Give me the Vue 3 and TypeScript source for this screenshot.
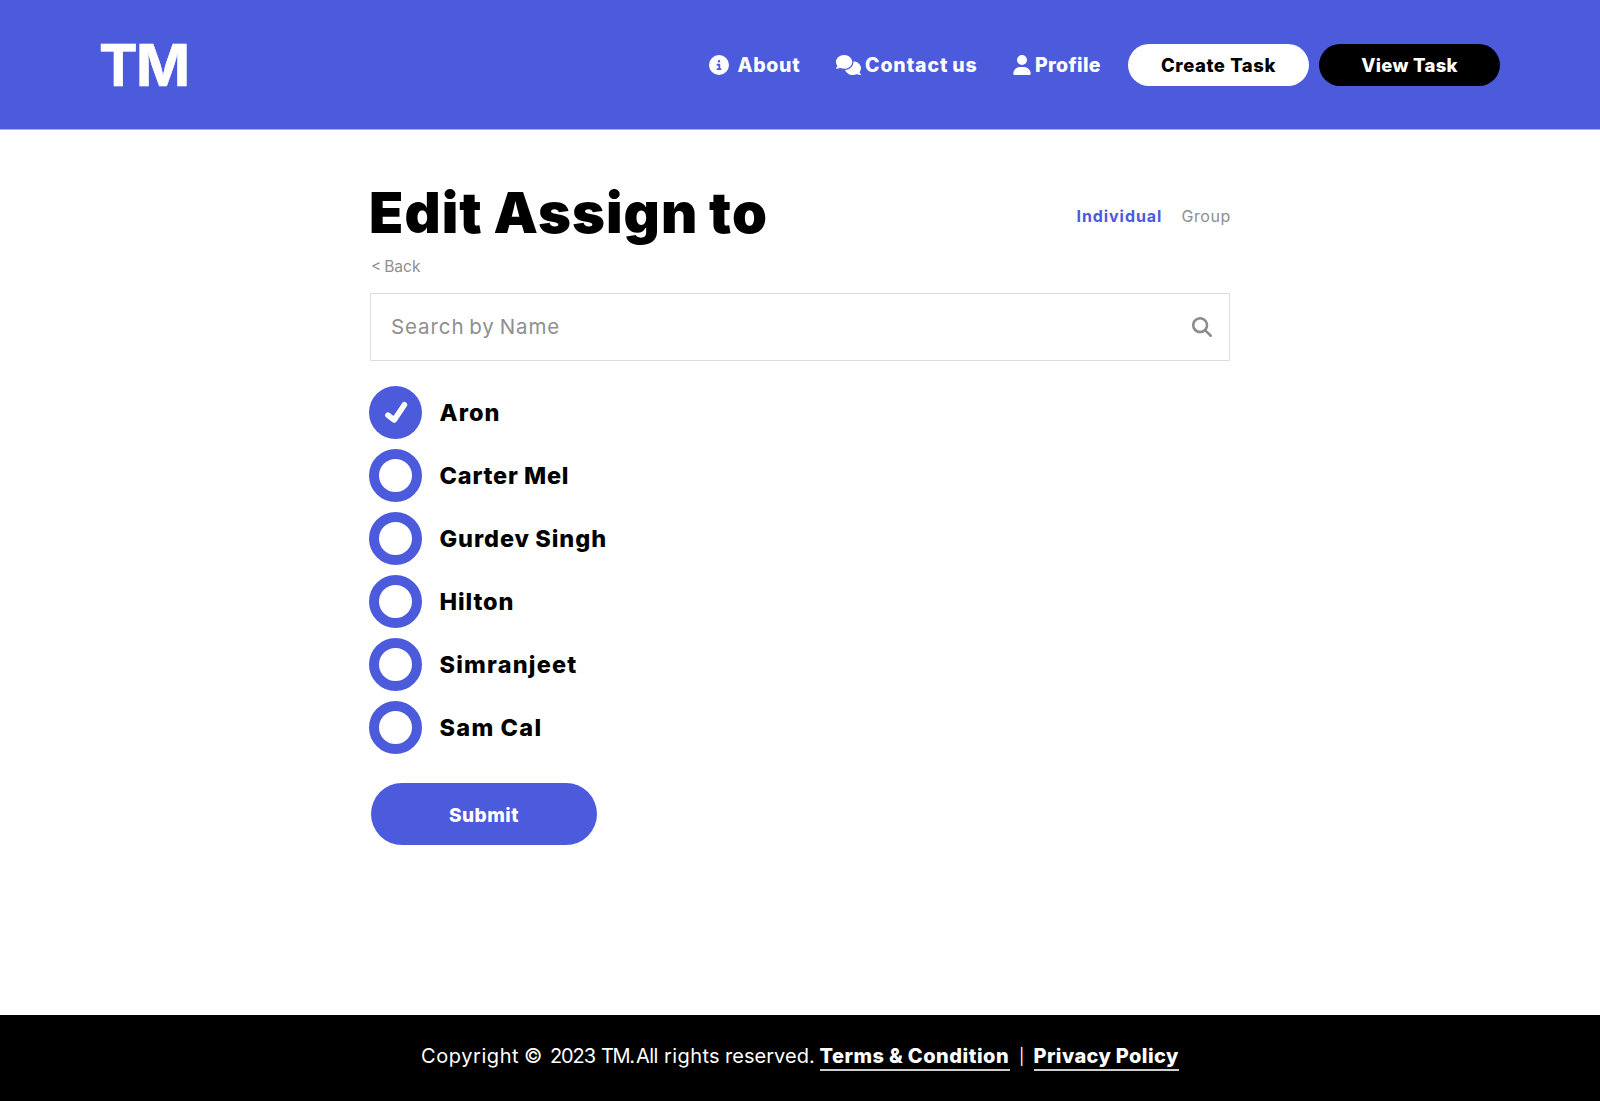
<script setup lang="ts">
import { ref } from 'vue'

interface Person {
  name: string
  spacing: number
}

interface Word {
  text: string
  width: number
  spacing: number
}

const people: Person[] = [
  { name: 'Aron', spacing: 1.05 },
  { name: 'Carter Mel', spacing: 0.8 },
  { name: 'Gurdev Singh', spacing: 0.92 },
  { name: 'Hilton', spacing: 0.89 },
  { name: 'Simranjeet', spacing: 1.2 },
  { name: 'Sam Cal', spacing: 1.35 },
]

const copyright: Word[] = [
  { text: 'Copyright', width: 103, spacing: 0.57 },
  { text: '©', width: 26, spacing: 0 },
  { text: '2023', width: 51, spacing: -1.1 },
  { text: 'TM.', width: 35, spacing: -1.4 },
  { text: 'All', width: 28, spacing: -0.6 },
  { text: 'rights', width: 61, spacing: 0.4 },
  { text: 'reserved.', width: 94.5, spacing: 0.04 },
]

const selected = ref('Aron')
const query = ref('')
</script>

<template>
  <div class="page">
    <header class="header">
      <div class="logo">TM</div>
      <nav class="nav">
        <a class="nav-item about">
          <svg class="icon-info" viewBox="0 0 512 512"><path d="M256 512A256 256 0 1 0 256 0a256 256 0 1 0 0 512zM216 336h24V272H216c-13.3 0-24-10.7-24-24s10.7-24 24-24h48c13.3 0 24 10.7 24 24v88h8c13.3 0 24 10.7 24 24s-10.7 24-24 24H216c-13.3 0-24-10.7-24-24s10.7-24 24-24zm40-208a32 32 0 1 1 0 64 32 32 0 1 1 0-64z" /></svg>
          <span>About</span>
        </a>
        <a class="nav-item contact">
          <svg class="icon-comments" viewBox="0 0 640 512"><path d="M208 352c114.9 0 208-78.8 208-176S322.9 0 208 0S0 78.8 0 176c0 38.6 14.7 74.3 39.6 103.4c-3.5 9.4-8.7 17.7-14.2 24.7c-4.8 6.2-9.7 11-13.3 14.3c-1.8 1.6-3.3 2.9-4.3 3.7c-.5 .4-.9 .7-1.1 .8l-.2 .2C1 327.2-1.4 334.4 .8 340.9S9.1 352 16 352c21.8 0 43.8-5.6 62.1-12.5c9.2-3.5 17.8-7.4 25.3-11.4C134.1 343.3 169.8 352 208 352zM448 176c0 112.3-99.1 196.9-216.5 207C255.8 457.4 336.4 512 432 512c38.2 0 73.9-8.7 104.7-23.9c7.5 4 16 7.9 25.2 11.4c18.3 6.9 40.3 12.5 62.1 12.5c6.9 0 13.1-4.5 15.2-11.1c2.1-6.6-.2-13.8-5.8-17.9l-.2-.2c-.2-.2-.6-.4-1.1-.8c-1-.8-2.5-2-4.3-3.7c-3.6-3.3-8.5-8.1-13.3-14.3c-5.5-7-10.7-15.4-14.2-24.7c24.9-29 39.6-64.7 39.6-103.4c0-92.8-84.9-168.9-192.6-175.5c.4 5.1 .6 10.3 .6 15.5z" /></svg>
          <span>Contact us</span>
        </a>
        <a class="nav-item profile">
          <svg class="icon-user" viewBox="0 0 448 512"><path d="M224 256A128 128 0 1 0 224 0a128 128 0 1 0 0 256zm-45.7 48C79.8 304 0 383.8 0 482.3C0 498.7 13.3 512 29.7 512H418.3c16.4 0 29.7-13.3 29.7-29.7C448 383.8 368.2 304 269.7 304H178.3z" /></svg>
          <span>Profile</span>
        </a>
        <button class="pill create" type="button">Create Task</button>
        <button class="pill view" type="button">View Task</button>
      </nav>
    </header>

    <main class="main">
      <div class="title-row">
        <h1>Edit Assign to</h1>
        <div class="tabs">
          <a class="tab active">Individual</a>
          <a class="tab">Group</a>
        </div>
      </div>
      <a class="back">&lt; Back</a>
      <label class="search">
        <input v-model="query" type="text" placeholder="Search by Name" />
        <svg class="icon-search" viewBox="0 0 512 512"><path d="M416 208c0 45.9-14.9 88.3-40 122.7L502.6 457.4c12.5 12.5 12.5 32.8 0 45.3s-32.8 12.5-45.3 0L330.7 376c-34.4 25.2-76.8 40-122.7 40C93.1 416 0 322.9 0 208S93.1 0 208 0S416 93.1 416 208zM208 352a144 144 0 1 0 0-288 144 144 0 1 0 0 288z" /></svg>
      </label>

      <ul class="people">
        <li v-for="p in people" :key="p.name" class="person" @click="selected = p.name">
          <span class="radio" :class="{ checked: selected === p.name }">
            <svg v-if="selected === p.name" viewBox="0 0 53 53"><path d="M19 29.2L25.3 33.9L35.4 18.8" /></svg>
          </span>
          <span class="name" :style="{ letterSpacing: p.spacing + 'px' }">{{ p.name }}</span>
        </li>
      </ul>

      <button class="submit" type="button">Submit</button>
    </main>

    <footer class="footer">
      <span
        v-for="w in copyright"
        :key="w.text"
        class="word"
        :style="{ width: w.width + 'px', letterSpacing: w.spacing + 'px' }"
      >{{ w.text }}</span>
      <a class="link terms">Terms &amp; Condition</a>
      <span class="bar">|</span>
      <a class="link privacy">Privacy Policy</a>
    </footer>
  </div>
</template>

<style>
body {
  background: #fff;
}
</style>

<style scoped>
.page {
  display: flex;
  flex-direction: column;
  height: 1101px;
  overflow: hidden;
  font-family: Inter, 'Noto Sans', sans-serif;
  color: #000;
  white-space: nowrap;
}
.page * {
  box-sizing: border-box;
}
button {
  font-family: inherit;
  border: 0;
  padding: 0;
}

.header {
  display: flex;
  justify-content: space-between;
  align-items: center;
  height: 130px;
  flex: none;
  padding: 0 100px 0 99px;
  background: #4c5adc;
  border-bottom: 1px solid #a5acee;
  color: #fff;
}
.logo {
  font-size: 58px;
  line-height: 60px;
  font-weight: 700;
  letter-spacing: -1.7px;
  -webkit-text-stroke: 0.6px #fff;
}
.nav {
  display: flex;
  align-items: center;
  height: 42px;
  margin-top: 1px;
}
.nav-item {
  display: flex;
  align-items: center;
  font-size: 19.5px;
  line-height: 24px;
  font-weight: 800;
}
.nav-item svg {
  fill: currentColor;
  flex: none;
}
.about {
  width: 127px;
  letter-spacing: 0.7px;
}
.icon-info {
  width: 20px;
  height: 20px;
  margin-right: 8.5px;
}
.contact {
  width: 177px;
  letter-spacing: 0.9px;
  word-spacing: -1.2px;
}
.icon-comments {
  width: 25px;
  height: 20px;
  margin-right: 4px;
}
.profile {
  width: 115px;
  letter-spacing: 0.35px;
}
.icon-user {
  width: 18px;
  height: 20px;
  margin-right: 4px;
}
.pill {
  width: 181px;
  height: 42px;
  border-radius: 21px;
  font-size: 18.5px;
  font-weight: 800;
}
.create {
  background: #fff;
  color: #000;
  letter-spacing: 0.55px;
}
.view {
  margin-left: 10px;
  background: #000;
  color: #fff;
  letter-spacing: 0.3px;
}

.main {
  display: flex;
  flex-direction: column;
  align-items: flex-start;
  width: 861px;
  flex: 1;
  margin-left: 369px;
}
.title-row {
  display: flex;
  justify-content: space-between;
  align-items: center;
  width: 861px;
  height: 70px;
  margin-top: 48px;
}
h1 {
  margin: 0;
  font-size: 56px;
  line-height: 70px;
  font-weight: 900;
  letter-spacing: 1.1px;
  word-spacing: -1.6px;
}
.tabs {
  display: flex;
  margin-top: 6px;
  font-size: 16px;
  line-height: 19px;
  color: #8f8f8f;
}
.tab {
  width: 48.5px;
  letter-spacing: 0.56px;
}
.tab.active {
  width: 105px;
  font-weight: 700;
  letter-spacing: 0.93px;
  color: #4c5adc;
}
.back {
  margin: 9px 0 0 2px;
  font-size: 15.5px;
  line-height: 20px;
  letter-spacing: 0;
  word-spacing: -1.4px;
  color: #8f8f8f;
}
.search {
  display: flex;
  align-items: center;
  justify-content: space-between;
  width: 860px;
  height: 68px;
  margin: 16px 0 0 1px;
  padding: 0 17px 0 20px;
  border: 1px solid #dcdcdc;
}
.search input {
  flex: 1;
  height: 40px;
  padding: 0 0 2px;
  border: 0;
  outline: 0;
  background: none;
  font-family: inherit;
  font-size: 20.5px;
  letter-spacing: 0.9px;
  word-spacing: -1.8px;
}
.search input::placeholder {
  color: #8f8f8f;
  opacity: 1;
}
.icon-search {
  width: 20px;
  height: 20px;
  fill: #8c8c8c;
}

.people {
  display: flex;
  flex-direction: column;
  gap: 10px;
  margin: 25px 0 0;
  padding: 0;
  list-style: none;
}
.person {
  display: flex;
  align-items: center;
  height: 53px;
}
.radio {
  width: 53px;
  height: 53px;
  margin-right: 17.5px;
  border: 10px solid #4c5adc;
  border-radius: 50%;
}
.radio.checked {
  border: 0;
  background: #4c5adc;
}
.radio svg {
  display: block;
  width: 53px;
  height: 53px;
  fill: none;
  stroke: #fff;
  stroke-width: 5.6;
  stroke-linecap: round;
  stroke-linejoin: round;
}
.name {
  font-size: 23.5px;
  line-height: 30px;
  font-weight: 800;
  word-spacing: -0.7px;
}
.submit {
  width: 226px;
  height: 62px;
  margin: 29px 0 0 2px;
  padding-top: 2px;
  border-radius: 31px;
  background: #4c5adc;
  color: #fff;
  font-size: 19px;
  font-weight: 800;
  letter-spacing: 0.5px;
}

.footer {
  display: flex;
  flex: none;
  height: 86px;
  padding: 26px 0 0 421px;
  background: #000;
  color: #fff;
  font-size: 20px;
  line-height: 30px;
}
.word {
  flex: none;
}
.link {
  height: 30px;
  font-weight: 800;
  letter-spacing: 0.52px;
  word-spacing: -0.4px;
  border-bottom: 2px solid #d0d0d0;
}
.terms {
  width: 190.5px;
}
.bar {
  width: 23.5px;
  padding-left: 9px;
  font-size: 16px;
}
.privacy {
  width: 145.5px;
  letter-spacing: 0.42px;
}
</style>
